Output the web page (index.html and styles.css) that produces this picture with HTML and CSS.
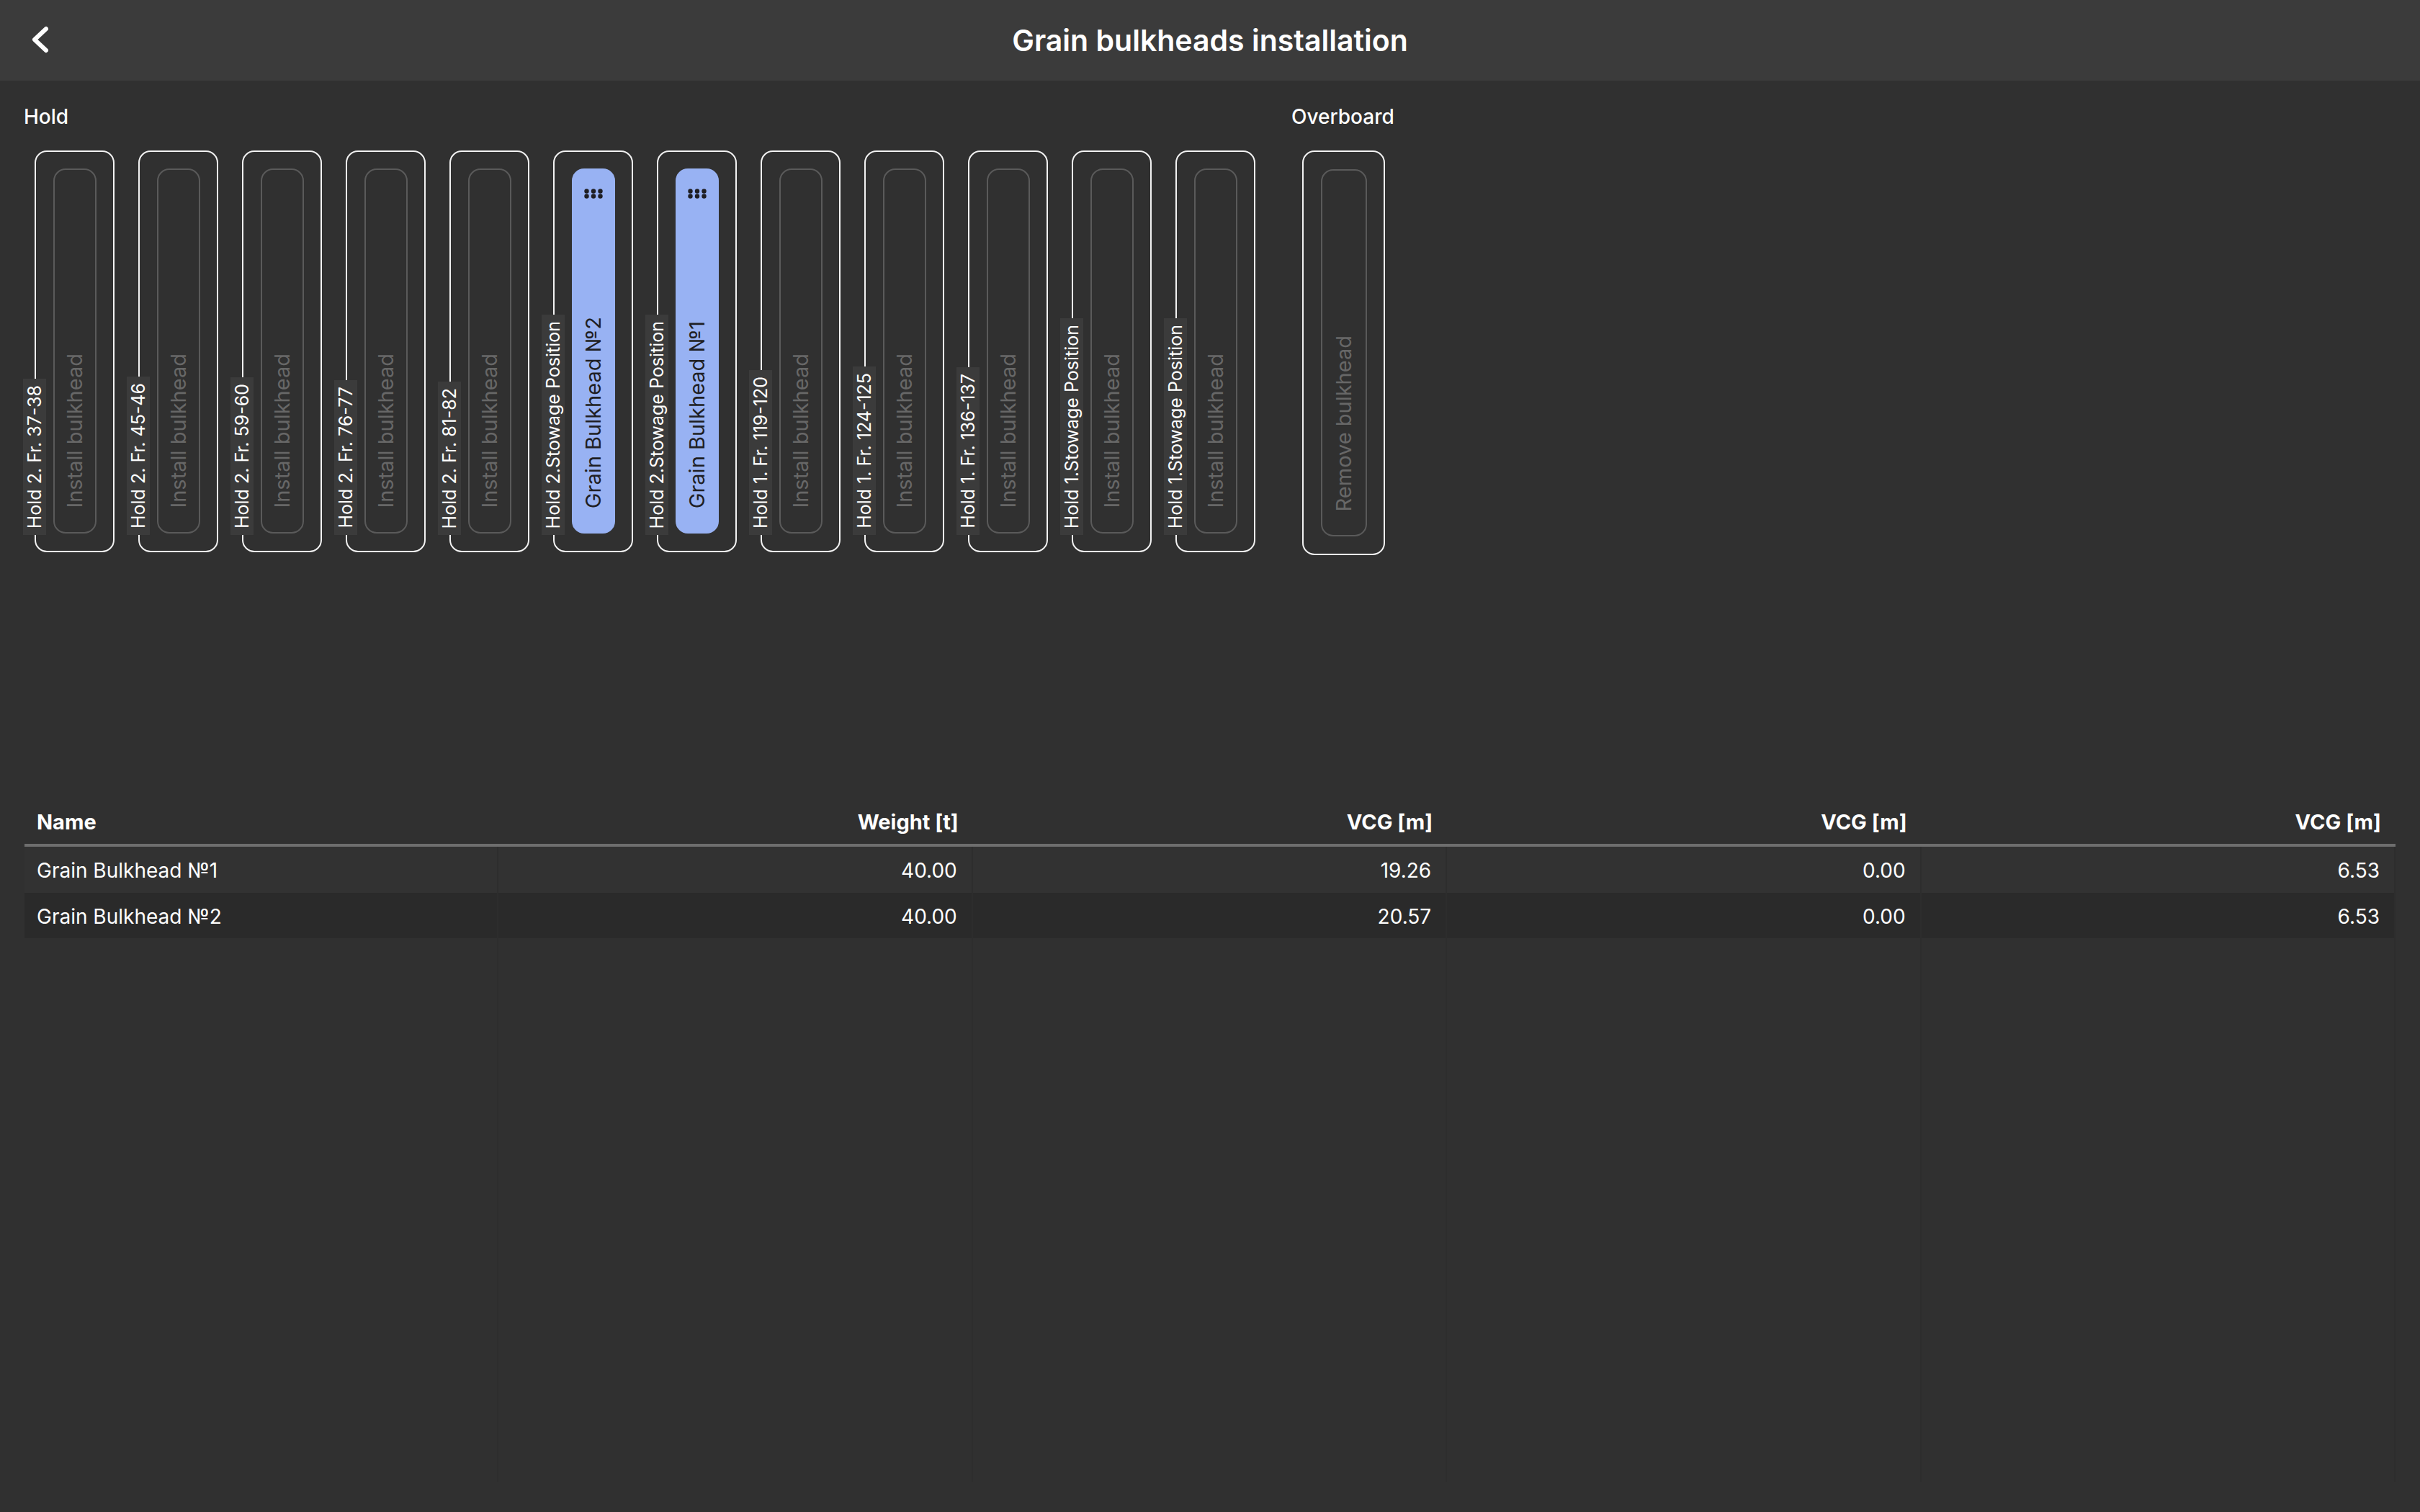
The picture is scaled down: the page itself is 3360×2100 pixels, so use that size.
FILE: index.html
```html
<!DOCTYPE html>
<html lang="en">
<head>
<meta charset="utf-8">
<title>Grain bulkheads installation</title>
<link rel="stylesheet" href="styles.css">
</head>
<body>
<header class="topbar">
  <button class="back" aria-label="Back">
    <svg width="40" height="50" viewBox="0 0 40 50"><polyline points="26,10 10,25 26,40" fill="none" stroke="#ffffff" stroke-width="6" stroke-linecap="round" stroke-linejoin="round"/></svg>
  </button>
  <h1 class="title">Grain bulkheads installation</h1>
</header>
<main class="content">
  <div class="zones">
    <section class="zone">
      <div class="zone-label">Hold</div>
      <div class="slots">
        <div class="frame"><span class="tag"><span class="vtext">Hold 2. Fr. 37-38</span></span><div class="cell"><span class="vtext">Install bulkhead</span></div></div>
        <div class="frame"><span class="tag"><span class="vtext">Hold 2. Fr. 45-46</span></span><div class="cell"><span class="vtext">Install bulkhead</span></div></div>
        <div class="frame"><span class="tag"><span class="vtext">Hold 2. Fr. 59-60</span></span><div class="cell"><span class="vtext">Install bulkhead</span></div></div>
        <div class="frame"><span class="tag"><span class="vtext">Hold 2. Fr. 76-77</span></span><div class="cell"><span class="vtext">Install bulkhead</span></div></div>
        <div class="frame"><span class="tag"><span class="vtext">Hold 2. Fr. 81-82</span></span><div class="cell"><span class="vtext">Install bulkhead</span></div></div>
        <div class="frame"><span class="tag"><span class="vtext">Hold 2.Stowage Position</span></span><div class="cell cell-filled"><svg class="grip" width="26" height="14" viewBox="0 0 26 14"><circle cx="3.5" cy="3.5" r="3.2"/><circle cx="13" cy="3.5" r="3.2"/><circle cx="22.5" cy="3.5" r="3.2"/><circle cx="3.5" cy="10.5" r="3.2"/><circle cx="13" cy="10.5" r="3.2"/><circle cx="22.5" cy="10.5" r="3.2"/></svg><span class="vtext">Grain Bulkhead №2</span></div></div>
        <div class="frame"><span class="tag"><span class="vtext">Hold 2.Stowage Position</span></span><div class="cell cell-filled"><svg class="grip" width="26" height="14" viewBox="0 0 26 14"><circle cx="3.5" cy="3.5" r="3.2"/><circle cx="13" cy="3.5" r="3.2"/><circle cx="22.5" cy="3.5" r="3.2"/><circle cx="3.5" cy="10.5" r="3.2"/><circle cx="13" cy="10.5" r="3.2"/><circle cx="22.5" cy="10.5" r="3.2"/></svg><span class="vtext">Grain Bulkhead №1</span></div></div>
        <div class="frame"><span class="tag"><span class="vtext">Hold 1. Fr. 119-120</span></span><div class="cell"><span class="vtext">Install bulkhead</span></div></div>
        <div class="frame"><span class="tag"><span class="vtext">Hold 1. Fr. 124-125</span></span><div class="cell"><span class="vtext">Install bulkhead</span></div></div>
        <div class="frame"><span class="tag"><span class="vtext">Hold 1. Fr. 136-137</span></span><div class="cell"><span class="vtext">Install bulkhead</span></div></div>
        <div class="frame"><span class="tag"><span class="vtext">Hold 1.Stowage Position</span></span><div class="cell"><span class="vtext">Install bulkhead</span></div></div>
        <div class="frame"><span class="tag"><span class="vtext">Hold 1.Stowage Position</span></span><div class="cell"><span class="vtext">Install bulkhead</span></div></div>
      </div>
    </section>
    <section class="zone zone-overboard">
      <div class="zone-label">Overboard</div>
      <div class="slots">
        <div class="frame frame-wide"><div class="cell"><span class="vtext">Remove bulkhead</span></div></div>
      </div>
    </section>
  </div>

  <div class="table">
    <div class="thead">
      <div class="th th-left">Name</div>
      <div class="th">Weight [t]</div>
      <div class="th">VCG [m]</div>
      <div class="th">VCG [m]</div>
      <div class="th">VCG [m]</div>
    </div>
    <div class="tr">
      <div class="td td-left">Grain Bulkhead №1</div>
      <div class="td">40.00</div>
      <div class="td">19.26</div>
      <div class="td">0.00</div>
      <div class="td">6.53</div>
    </div>
    <div class="tr tr-alt">
      <div class="td td-left">Grain Bulkhead №2</div>
      <div class="td">40.00</div>
      <div class="td">20.57</div>
      <div class="td">0.00</div>
      <div class="td">6.53</div>
    </div>
    <div class="tr tr-fill">
      <div class="td"></div>
      <div class="td"></div>
      <div class="td"></div>
      <div class="td"></div>
      <div class="td"></div>
    </div>
  </div>
</main>
</body>
</html>
```

FILE: styles.css
```css
* { box-sizing: border-box; }

html, body {
  margin: 0;
  padding: 0;
  height: 2100px;
  background: #303030;
  color: #ffffff;
  font-family: Inter, "Noto Sans", "Liberation Sans", sans-serif;
}

body {
  display: flex;
  flex-direction: column;
}

.topbar {
  height: 112px;
  flex: 0 0 112px;
  background: #3b3b3b;
  display: flex;
  align-items: center;
  justify-content: center;
  position: relative;
}

.back {
  position: absolute;
  left: 38px;
  top: 30px;
  width: 40px;
  height: 50px;
  padding: 0;
  border: 0;
  background: transparent;
  display: block;
}

.back svg { display: block; }

.title {
  margin: 0;
  font-size: 41px;
  font-weight: 600;
  line-height: 48px;
  letter-spacing: 0;
}

.content {
  flex: 1;
  display: flex;
  flex-direction: column;
  padding: 33px 34px 42px 33px;
}

.zones {
  display: flex;
  gap: 50px;
  align-items: flex-start;
}

.zone {
  display: flex;
  flex-direction: column;
}

.zone-label {
  font-size: 28px;
  line-height: 34px;
  font-weight: 500;
  color: #ffffff;
}

.slots {
  display: flex;
  gap: 33px;
  padding-left: 15px;
  margin-top: 30px;
}

.frame {
  position: relative;
  width: 111px;
  height: 558px;
  border: 2px solid #f2f2f2;
  border-radius: 17px;
  padding: 23px 23px 24px 24px;
  display: flex;
}

.frame-wide {
  width: 115px;
  height: 562px;
  padding: 24px 23px 24px 24px;
}

.vtext {
  writing-mode: vertical-rl;
  text-orientation: sideways;
  transform: rotate(180deg);
  white-space: nowrap;
}

.tag {
  position: absolute;
  left: -18px;
  bottom: 22px;
  width: 32px;
  padding: 9px 0;
  background: #3b3b3b;
  display: flex;
  justify-content: center;
  font-size: 25px;
  line-height: 32px;
  color: #ffffff;
}

.cell {
  flex: 1;
  border: 2px solid #5a5a5a;
  border-radius: 17px;
  display: flex;
  flex-direction: column;
  justify-content: flex-end;
  align-items: center;
  padding-bottom: 33px;
  font-size: 29px;
  line-height: 34px;
  color: #676767;
}

.cell-filled {
  background: #98b2f3;
  border-color: #98b2f3;
  color: #1f1f24;
  justify-content: space-between;
  padding-top: 26px;
}

.grip {
  display: block;
  fill: #1f1f24;
}

.table {
  flex: 1;
  display: flex;
  flex-direction: column;
  margin-top: 339px;
  margin-left: 1px;
}

.thead,
.tr {
  display: grid;
  grid-template-columns: repeat(5, 1fr);
}

.thead {
  border-bottom: 4px solid #6e6e6e;
}

.th {
  padding: 14px 20px 13px 17px;
  font-size: 29px;
  line-height: 35px;
  font-weight: 700;
  text-align: right;
}

.th-left { text-align: left; }

.tr {
  height: 64px;
  background: #323232;
}

.tr-alt {
  height: 63px;
  background: #2a2a2a;
}

.tr-fill {
  flex: 1;
  height: auto;
  background: transparent;
}

.td {
  padding: 16px 20px 13px 17px;
  font-size: 28px;
  line-height: 35px;
  text-align: right;
  border-right: 2px solid #2d2d2d;
}

.td-left { text-align: left; }
```
